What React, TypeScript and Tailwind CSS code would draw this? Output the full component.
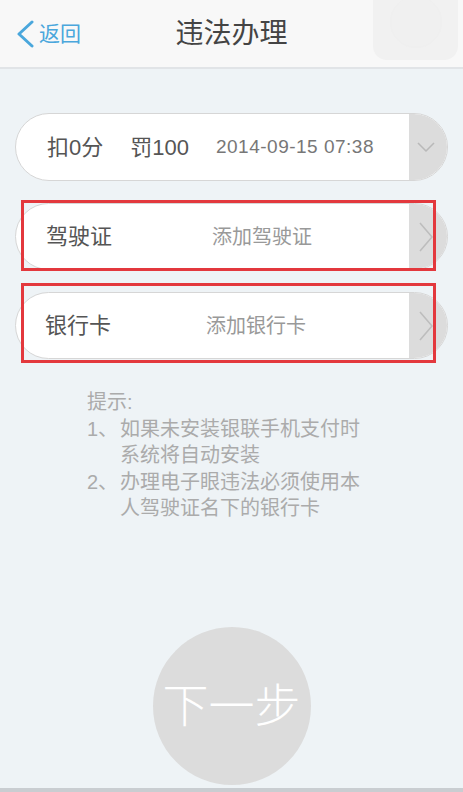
import React from "react"

const FONT = '"Liberation Sans", "Noto Sans CJK SC", sans-serif'

function ChevronRight() {
  return (
    <svg width="16" height="30" viewBox="0 0 16 30" fill="none">
      <path d="M2 1 L14 15 L2 29" stroke="#bdbdbd" strokeWidth="1.6" strokeLinejoin="round" />
    </svg>
  )
}

function ChevronDown() {
  return (
    <svg width="18" height="10" viewBox="0 0 18 10" fill="none">
      <path d="M1 1 L9 9 L17 1" stroke="#b9b9b9" strokeWidth="1.6" strokeLinejoin="round" />
    </svg>
  )
}

interface PillProps {
  children: React.ReactNode
  icon: React.ReactNode
  height: string
}

function Pill({ children, icon, height }: PillProps) {
  return (
    <div className={`mx-[15px] flex ${height} overflow-hidden rounded-full border border-[#d6d6d6] bg-white`}>
      <div className="flex flex-1 items-center">{children}</div>
      <div className="flex w-[38px] items-center justify-center bg-[#dcdcdc] pr-[4px]">{icon}</div>
    </div>
  )
}

export default function App() {
  return (
    <div className="flex h-[792px] w-full flex-col bg-[#eef3f6]" style={{ fontFamily: FONT }}>
      {/* Header */}
      <div className="relative flex h-[69px] shrink-0 items-center justify-center border-b-2 border-[#e1e4e7] bg-[#f8f8f8]">
        <div className="absolute left-[15px] top-[18px] flex items-center">
          <svg width="20" height="28" viewBox="0 0 20 28" fill="none">
            <path d="M17 2 L4 14 L17 26" stroke="#4aa7dc" strokeWidth="3" strokeLinecap="round" strokeLinejoin="round" />
          </svg>
          <span className="ml-[4px] text-[21px] text-[#4aa7dc]">返回</span>
        </div>
        <h1 className="text-[28px] text-[#444444]">违法办理</h1>
        <div className="absolute right-[5px] top-0 flex h-[60px] w-[85px] items-center justify-center rounded-b-[14px] bg-[#f1f1f1]">
          <div className="h-[52px] w-[52px] -translate-y-[8px] rounded-full border border-[#efefef] bg-[#f0f0f0]" />
        </div>
      </div>

      {/* Violation row */}
      <div className="mt-[44px]">
        <Pill height="h-[68px]" icon={<ChevronDown />}>
          <span className="ml-[31px] text-[22px] text-[#555555]">扣0分</span>
          <span className="ml-[27px] text-[22px] text-[#555555]">罚100</span>
          <span className="ml-[27px] text-[19px] tracking-[0.5px] text-[#777777]">2014-09-15 07:38</span>
        </Pill>
      </div>

      {/* Driver licence */}
      <div className="relative mt-[22px]">
        <Pill height="h-[67px]" icon={<ChevronRight />}>
          <span className="ml-[30px] w-[166px] text-[22px] text-[#555555]">驾驶证</span>
          <span className="text-[20px] text-[#999999]">添加驾驶证</span>
        </Pill>
        <div className="absolute -top-[3px] left-[21px] right-[27px] -bottom-[1px] border-[3px] border-[#e3383d]" />
      </div>

      {/* Bank card */}
      <div className="relative mt-[22px]">
        <Pill height="h-[67px]" icon={<ChevronRight />}>
          <span className="ml-[29px] w-[161px] text-[22px] text-[#555555]">银行卡</span>
          <span className="text-[20px] text-[#999999]">添加银行卡</span>
        </Pill>
        <div className="absolute -top-[9px] left-[21px] right-[27px] -bottom-[4px] border-[3px] border-[#e3383d]" />
      </div>

      {/* Tips */}
      <div className="ml-[87px] mt-[30px] text-[20px] leading-[26.5px] text-[#ababab]">
        <div>提示:</div>
        <div className="flex">
          <span className="w-[33px] shrink-0">1、</span>
          <span className="w-[245px]">如果未安装银联手机支付时系统将自动安装</span>
        </div>
        <div className="flex">
          <span className="w-[33px] shrink-0">2、</span>
          <span className="w-[245px]">办理电子眼违法必须使用本人驾驶证名下的银行卡</span>
        </div>
      </div>

      {/* Next button */}
      <div className="mt-auto mb-[3px] flex justify-center">
        <button className="flex h-[158px] w-[158px] items-center justify-center rounded-full bg-[#dcdcdc] text-[46px] font-light text-white">
          下一步
        </button>
      </div>
      <div className="h-[4px] shrink-0 bg-[#c9cdd1]" />
    </div>
  )
}
